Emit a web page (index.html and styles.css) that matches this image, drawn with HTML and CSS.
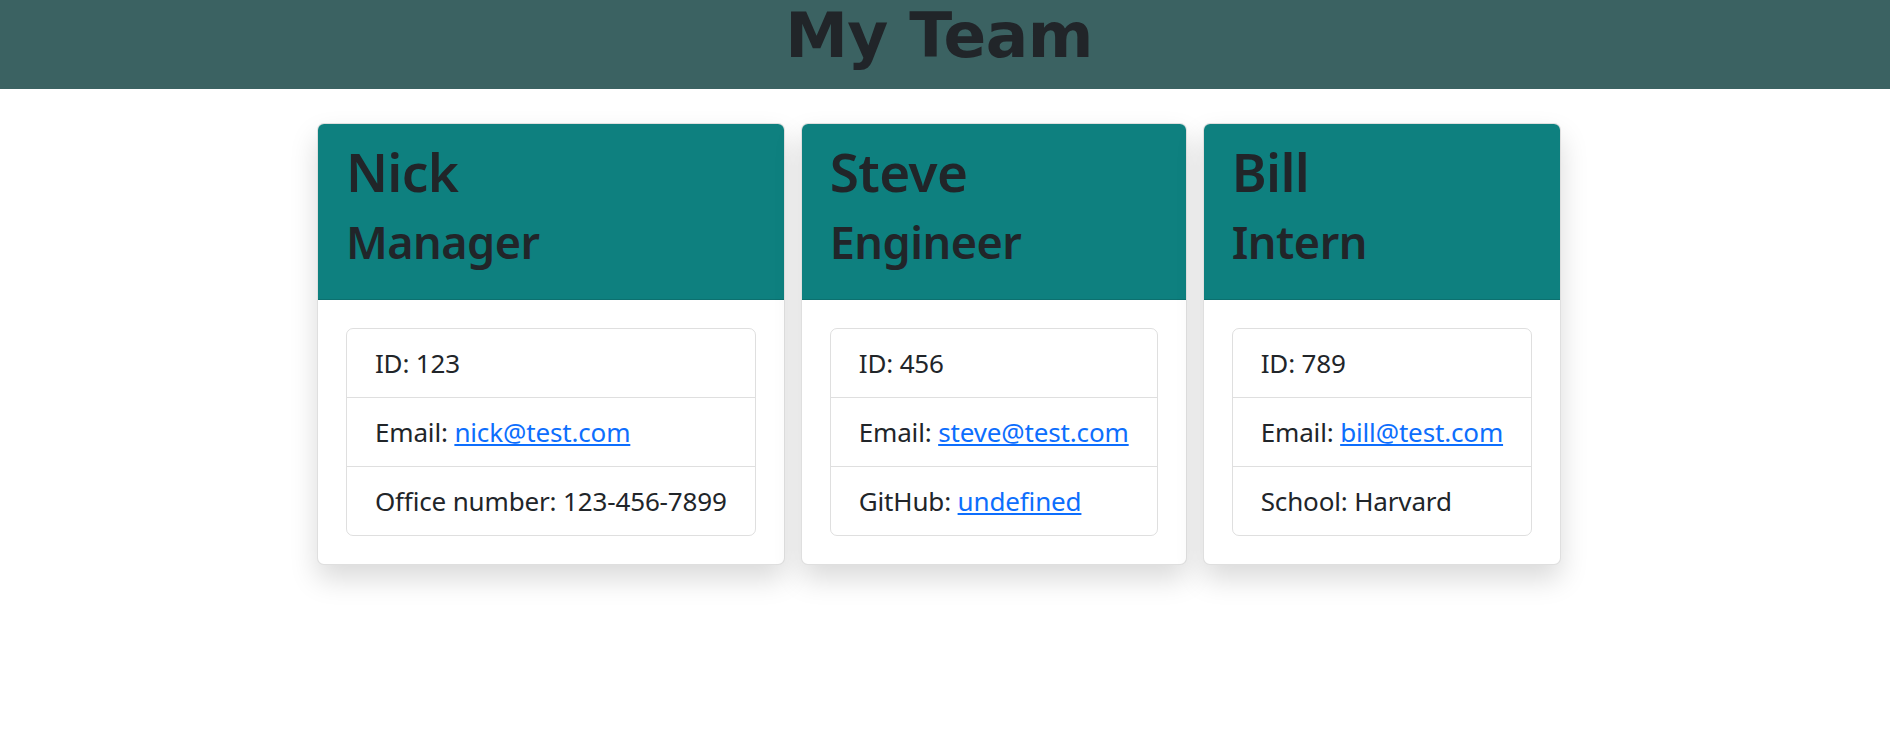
FILE: index.html
```html
<!DOCTYPE html>
<html lang="en">
<head>
<meta charset="utf-8">
<title>My Team</title>
<link rel="stylesheet" href="styles.css">
</head>
<body>
<header class="topbar">
  <h1 class="topbar-title">My Team</h1>
</header>
<main class="team">
  <article class="card">
    <div class="card-header">
      <h2 class="card-name">Nick</h2>
      <h3 class="card-role">Manager</h3>
    </div>
    <div class="card-body">
      <ul class="list">
        <li class="list-item">ID: 123</li>
        <li class="list-item">Email: <a href="mailto:nick@test.com">nick@test.com</a></li>
        <li class="list-item">Office number: 123-456-7899</li>
      </ul>
    </div>
  </article>
  <article class="card">
    <div class="card-header">
      <h2 class="card-name">Steve</h2>
      <h3 class="card-role">Engineer</h3>
    </div>
    <div class="card-body">
      <ul class="list">
        <li class="list-item">ID: 456</li>
        <li class="list-item">Email: <a href="mailto:steve@test.com">steve@test.com</a></li>
        <li class="list-item">GitHub: <a href="#">undefined</a></li>
      </ul>
    </div>
  </article>
  <article class="card">
    <div class="card-header">
      <h2 class="card-name">Bill</h2>
      <h3 class="card-role">Intern</h3>
    </div>
    <div class="card-body">
      <ul class="list">
        <li class="list-item">ID: 789</li>
        <li class="list-item">Email: <a href="mailto:bill@test.com">bill@test.com</a></li>
        <li class="list-item">School: Harvard</li>
      </ul>
    </div>
  </article>
</main>
</body>
</html>
```
FILE: styles.css
```css
* { box-sizing: border-box; }
html, body {
  margin: 0;
  padding: 0;
  background: #ffffff;
}
body {
  min-height: 100vh;
  font-family: "Noto Sans", "Open Sans", sans-serif;
  color: #212529;
}
.topbar {
  height: 89px;
  background: #3b6262;
  display: flex;
  justify-content: center;
  padding-right: 12px;
}
.topbar-title {
  margin: 0;
  font-family: "DejaVu Sans", sans-serif;
  font-weight: bold;
  font-size: 63px;
  line-height: 72px;
  letter-spacing: -0.5px;
  color: #212529;
}
.team {
  display: flex;
  justify-content: center;
  align-items: flex-start;
  gap: 16px;
  padding: 34px 12px 60px 0;
}
.card {
  flex: none;
  background: #fff;
  border: 1px solid rgba(0,0,0,0.125);
  border-radius: 7px;
  box-shadow: 0 14px 28px rgba(0,0,0,0.15);
  overflow: hidden;
}
.card-header {
  background: #0e807f;
  border-bottom: 1px solid rgba(0,0,0,0.125);
  padding: 14px 28px 24px;
}
.card-name {
  margin: 0 0 4px;
  font-size: 53px;
  font-weight: 600;
  line-height: 67px;
  letter-spacing: -0.6px;
}
.card-role {
  margin: 0;
  font-size: 45px;
  font-weight: 600;
  line-height: 66px;
  letter-spacing: -0.5px;
}
.card-body {
  padding: 28px;
}
.list {
  list-style: none;
  margin: 0;
  padding: 0;
  border: 1px solid rgba(0,0,0,0.125);
  border-radius: 7px;
}
.list-item {
  padding: 14px 28px;
  font-size: 26px;
  line-height: 40px;
  letter-spacing: -0.15px;
  border-bottom: 1px solid rgba(0,0,0,0.125);
}
.list-item:last-child { border-bottom: 0; }
.list-item a { color: #0d6efd; }
```
